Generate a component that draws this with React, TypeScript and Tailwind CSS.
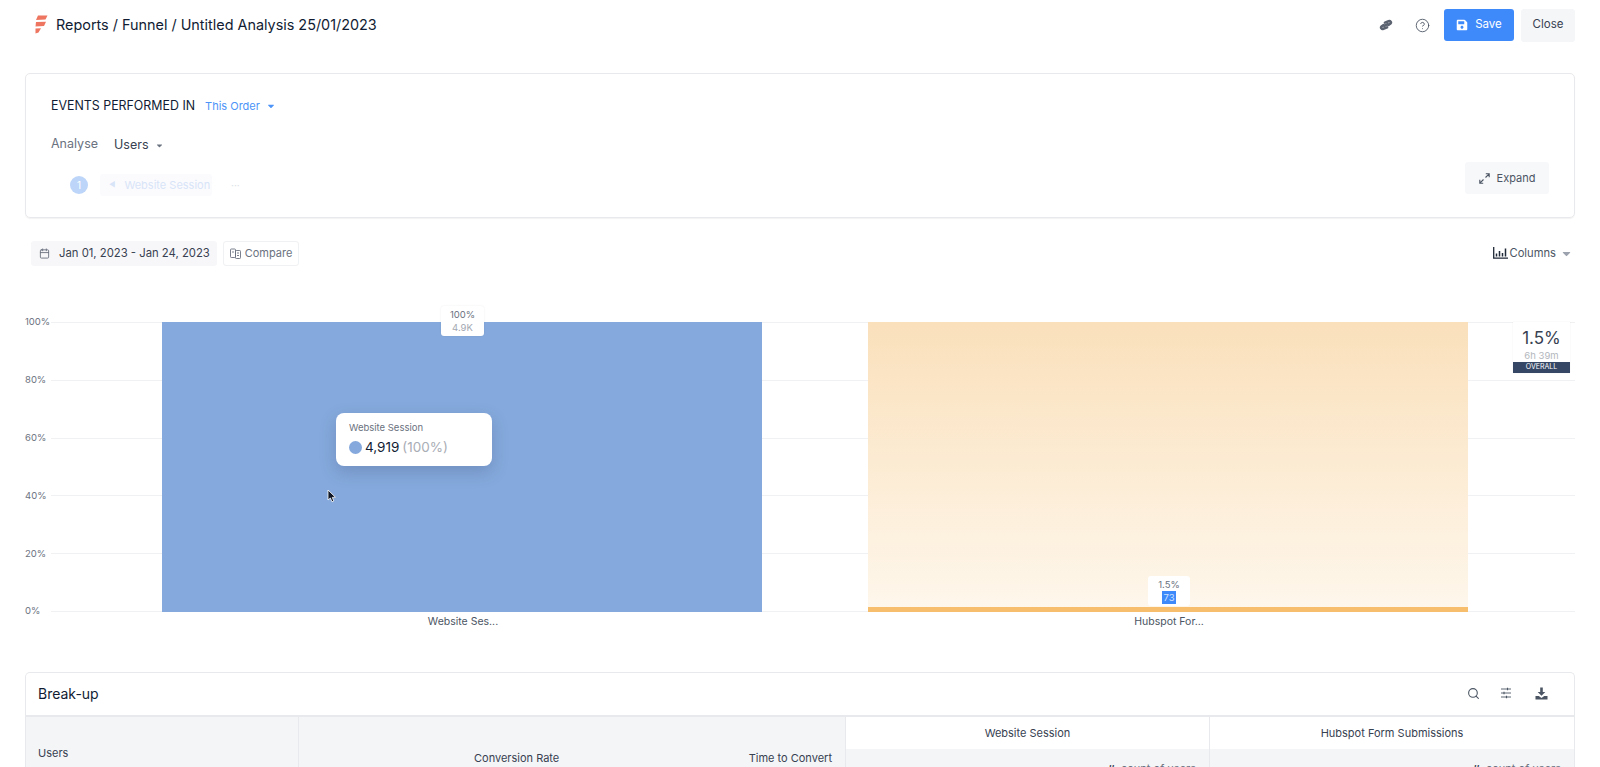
import { Calendar, CircleHelp, Search } from "lucide-react";
import { FaSave, FaCaretDown } from "react-icons/fa";

const ticks = ["100%", "80%", "60%", "40%", "20%", "0%"];

function Logo() {
  return (
    <svg width="13" height="19" viewBox="0 0 13 19" fill="#ee7560">
      <path d="M3 0.5 L12.5 0.5 L10.5 4.5 L1 5 Z" />
      <path d="M1 7 L11 6.8 L9 11 L0.5 11.4 Z" />
      <path d="M0.5 13.4 L6 13.2 L3.5 17.5 L0.5 18.5 Z" />
    </svg>
  );
}

function LinkIcon() {
  return (
    <svg width="14" height="12" viewBox="0 0 14 12" fill="none" stroke="#5b6270" strokeWidth="2.6" strokeLinecap="round">
      <path d="M6 3.6 L9.6 2.2 C11.4 1.6 12.6 3.4 11.4 4.6 L9.4 6" />
      <path d="M8 8.4 L4.4 9.8 C2.6 10.4 1.4 8.6 2.6 7.4 L4.6 6" />
      <path d="M5.4 7 L8.6 5" />
    </svg>
  );
}

function ExpandIcon() {
  return (
    <svg width="11" height="11" viewBox="0 0 11 11" fill="none" stroke="#4b5563" strokeWidth="1.1">
      <path d="M6.5 4.5 L10.2 0.8 M6.8 0.8 H10.2 V4.2" />
      <path d="M4.5 6.5 L0.8 10.2 M4.2 10.2 H0.8 V6.8" />
    </svg>
  );
}

function CompareIcon() {
  return (
    <svg width="11" height="11" viewBox="0 0 11 11" fill="none" stroke="#6b7280" strokeWidth="0.9">
      <rect x="0.5" y="1" width="5" height="8.5" rx="0.8" />
      <rect x="5.5" y="2.5" width="5" height="8" rx="0.8" />
      <path d="M2 4 H4 M7 5 H9 M7 7.5 H9" />
    </svg>
  );
}

function ColumnsIcon() {
  return (
    <svg width="15" height="12" viewBox="0 0 15 12" fill="none" stroke="#1f2937">
      <path d="M0.7 0 V11.2 H15" strokeWidth="1.3" />
      <path d="M3.5 9.5 V6.5 M6.5 9.5 V4 M9.5 9.5 V6 M12.5 9.5 V1.5" strokeWidth="1.5" />
    </svg>
  );
}

function SlidersIcon() {
  return (
    <svg width="12" height="12" viewBox="0 0 12 12" fill="none" stroke="#4b5563" strokeWidth="0.9">
      <path d="M1 2 H11 M1 6 H11 M1 10 H11" />
      <path d="M7.5 0.8 V3.2 M4 4.8 V7.2 M6.5 8.8 V11.2" strokeWidth="1.1" />
    </svg>
  );
}

function DownloadIcon() {
  return (
    <svg width="13" height="13" viewBox="0 0 13 13" fill="#4b5563">
      <path d="M5.2 0.5 H7.8 V5 H10.3 L6.5 8.8 L2.7 5 H5.2 Z" />
      <path d="M0.5 9 H3.8 L6.5 11 L9.2 9 H12.5 V12.5 H0.5 Z" />
    </svg>
  );
}

function Cursor() {
  return (
    <svg width="10" height="14" viewBox="0 0 10 14">
      <path d="M1 1 L1 11 L3.4 9 L5 12.8 L6.8 12 L5.3 8.4 L8.4 8.2 Z" fill="#111827" stroke="#ffffff" strokeWidth="0.8" />
    </svg>
  );
}

function Header() {
  return (
    <header className="flex h-[50px] items-center justify-between pl-[35px] pr-[25px]">
      <div className="flex items-center gap-[8px]">
        <Logo />
        <h1 className="text-[14.4px] text-[#111c33]">Reports / Funnel / Untitled Analysis 25/01/2023</h1>
      </div>
      <div className="flex items-center">
        <LinkIcon />
        <CircleHelp size={15} strokeWidth={1.4} className="ml-[22px] text-[#4b5563]" />
        <button className="ml-[14px] flex h-[32px] w-[70px] items-center justify-center gap-[7px] rounded-[3px] bg-[#3e8afa] text-[11.5px] text-white">
          <FaSave size={12} />
          Save
        </button>
        <button className="ml-[7px] h-[33px] w-[54px] rounded-[3px] bg-[#f5f6f8] text-[11.5px] text-[#374151]">Close</button>
      </div>
    </header>
  );
}

function QueryCard() {
  return (
    <section className="mt-[23px] flex h-[145px] items-end justify-between rounded-[5px] border border-[#e8e9ec] pb-[21px] pl-[25px] pr-[25px] shadow-[0_1px_1px_rgba(0,0,0,0.05)]">
      <div className="flex flex-col">
        <div className="flex h-[20px] items-center">
          <span className="text-[12.4px] text-[#111c33]">EVENTS PERFORMED IN</span>
          <span className="ml-[10px] text-[11px] text-[#4d94f8]">This Order</span>
          <FaCaretDown size={10} className="ml-[6px] text-[#4d94f8]" />
        </div>
        <div className="mt-[19px] flex h-[20px] items-center">
          <span className="w-[63px] -translate-y-[1px] text-[12.5px] text-[#6b7280]">Analyse</span>
          <span className="text-[12.5px] text-[#374151]">Users</span>
          <FaCaretDown size={9} className="ml-[6px] text-[#6b7280]" />
        </div>
        <div className="mt-[19px] flex h-[22px] items-center pl-[19px]">
          <span className="flex h-[18px] w-[18px] items-center justify-center rounded-full bg-[#bcd5f8] text-[10px] text-white">1</span>
          <span className="ml-[12px] flex h-[22px] w-[112px] items-center gap-[9px] rounded-[3px] bg-[#fbfbfd] pl-[9px] text-[11px] text-[#d8e4f8]">
            <span className="text-[7px]">◄</span>
            Website Session
          </span>
          <span className="ml-[19px] text-[10px] text-[#dcdfe5]">···</span>
        </div>
      </div>
      <button className="mb-[2px] flex h-[32px] w-[84px] items-center justify-center gap-[7px] rounded-[3px] bg-[#f7f8fa] text-[11px] text-[#4b5563]">
        <ExpandIcon />
        Expand
      </button>
    </section>
  );
}

function Toolbar() {
  return (
    <div className="mt-[23px] flex h-[25px] items-center justify-between pl-[6px] pr-[2px]">
      <div className="flex items-center gap-[6px]">
        <div className="flex h-[25px] w-[186px] items-center gap-[9px] rounded-[3px] bg-[#f7f7f9] pl-[8px] text-[11.3px] text-[#374151]">
          <Calendar size={11} className="text-[#6b7280]" />
          Jan 01, 2023 - Jan 24, 2023
        </div>
        <div className="flex h-[25px] w-[76px] items-center justify-center gap-[4px] rounded-[3px] border border-[#f0f1f3] text-[11px] text-[#6b7280]">
          <CompareIcon />
          Compare
        </div>
      </div>
      <div className="flex items-center gap-[1px] text-[11.2px] text-[#4b5563]">
        <ColumnsIcon />
        Columns
        <FaCaretDown size={13} className="ml-[3px] text-[#9ca3af]" />
      </div>
    </div>
  );
}

function Chart() {
  return (
    <div className="relative mt-[56px] h-[290px]">
      <div className="flex h-full flex-col justify-between">
        {ticks.map((t) => (
          <div key={t} className="flex h-px items-center">
            <span className="w-[26px] text-[9.5px] text-[#6b7280]">{t}</span>
            <div className="h-px flex-1 bg-[#f0f1f3]" />
          </div>
        ))}
      </div>
      <div className="absolute inset-y-0 left-[137px] flex gap-[106px]">
        <div className="relative w-[600px] bg-[#85a9dc]">
          <div className="absolute left-[279px] top-[-16px] flex h-[30px] w-[43px] flex-col items-center justify-center rounded-[3px] bg-white text-[9.5px] leading-[13px] shadow-[0_0_2px_rgba(0,0,0,0.08)]">
            <span className="text-[#6b7280]">100%</span>
            <span className="text-[#a3a8b1]">4.9K</span>
          </div>
          <div className="absolute left-[174px] top-[91px] h-[53px] w-[156px] rounded-[8px] bg-white pl-[13px] pt-[8px] shadow-[0_6px_16px_rgba(50,70,110,0.25)]">
            <div className="text-[9.5px] leading-[13px] text-[#6b7280]">Website Session</div>
            <div className="mt-[4px] flex items-center gap-[3px] text-[13.5px] leading-[18px]">
              <span className="h-[13px] w-[13px] rounded-full bg-[#85a9dc]" />
              <span className="text-[#111c33]">4,919</span>
              <span className="text-[#a9adb5]">(100%)</span>
            </div>
          </div>
          <div className="absolute left-[165px] top-[167px]">
            <Cursor />
          </div>
        </div>
        <div className="relative flex w-[600px] flex-col bg-gradient-to-b from-[#fae0bb] to-[#fef7ec]">
          <div className="absolute left-[280px] top-[254px] flex h-[30px] w-[42px] flex-col items-center justify-center rounded-[3px] bg-white text-[9.5px] leading-[13px]">
            <span className="text-[#6b7280]">1.5%</span>
            <span className="bg-[#3e8afa] px-px text-[#cfe2fd]">73</span>
          </div>
          <div className="mt-auto h-[5px] bg-[#f7be6d]" />
        </div>
      </div>
      <div className="absolute right-[5px] top-0 flex h-[51px] w-[57px] flex-col items-center bg-white shadow-[0_0_1px_rgba(0,0,0,0.1)]">
        <span className="mt-[4px] text-[17px] leading-[24px] text-[#374151]">1.5%</span>
        <span className="text-[9.5px] leading-[11px] text-[#b3b7bd]">6h 39m</span>
        <span className="mt-auto flex h-[11px] w-full items-center justify-center bg-[#364765] text-[7px] text-white">OVERALL</span>
      </div>
    </div>
  );
}

function XLabels() {
  return (
    <div className="mt-[3px] flex h-[14px] gap-[106px] pl-[138px] text-[10.5px] leading-[14px] text-[#4b5563]">
      <span className="w-[600px] text-center">Website Ses...</span>
      <span className="w-[600px] text-center">Hubspot For...</span>
    </div>
  );
}

function BreakUp() {
  return (
    <section className="mt-[43px] rounded-t-[5px] border border-b-0 border-[#e8e9ec]">
      <div className="flex h-[44px] items-center justify-between border-b-2 border-[#e8e9ec] pb-[2px] pl-[12px] pr-[26px]">
        <span className="text-[14px] text-[#111c33]">Break-up</span>
        <div className="flex items-center gap-[20px]">
          <Search size={13} className="text-[#4b5563]" />
          <SlidersIcon />
          <span className="ml-[3px]">
            <DownloadIcon />
          </span>
        </div>
      </div>
      <div className="grid h-[60px] grid-cols-[273px_547px_364px_1fr] text-[11px] text-[#374151]">
        <div className="border-r border-[#e8e9ec] bg-[#f4f5f7] pl-[12px] pt-[28px]">Users</div>
        <div className="flex justify-between border-r border-[#e8e9ec] bg-[#f4f5f7] pl-[175px] pr-[13px] pt-[33px]">
          <span>Conversion Rate</span>
          <span>Time to Convert</span>
        </div>
        <div className="flex flex-col border-r border-[#e8e9ec]">
          <div className="flex h-[32px] shrink-0 items-center justify-center">Website Session</div>
          <div className="flex-1 bg-[#f4f5f7] pr-[13px] pt-[12px] text-right text-[11px] text-[#6b7280]">
            <span className="mr-[3px] font-bold text-[#374151]">#</span> count of users
          </div>
        </div>
        <div className="flex flex-col">
          <div className="flex h-[32px] shrink-0 items-center justify-center">Hubspot Form Submissions</div>
          <div className="flex-1 bg-[#f4f5f7] pr-[13px] pt-[12px] text-right text-[11px] text-[#6b7280]">
            <span className="mr-[3px] font-bold text-[#374151]">#</span> count of users
          </div>
        </div>
      </div>
    </section>
  );
}

export default function App() {
  return (
    <div className="h-[767px] w-[1600px] overflow-hidden bg-white font-['Inter',sans-serif]">
      <Header />
      <main className="pl-[25px] pr-[25px]">
        <QueryCard />
        <Toolbar />
        <Chart />
        <XLabels />
        <BreakUp />
      </main>
    </div>
  );
}
